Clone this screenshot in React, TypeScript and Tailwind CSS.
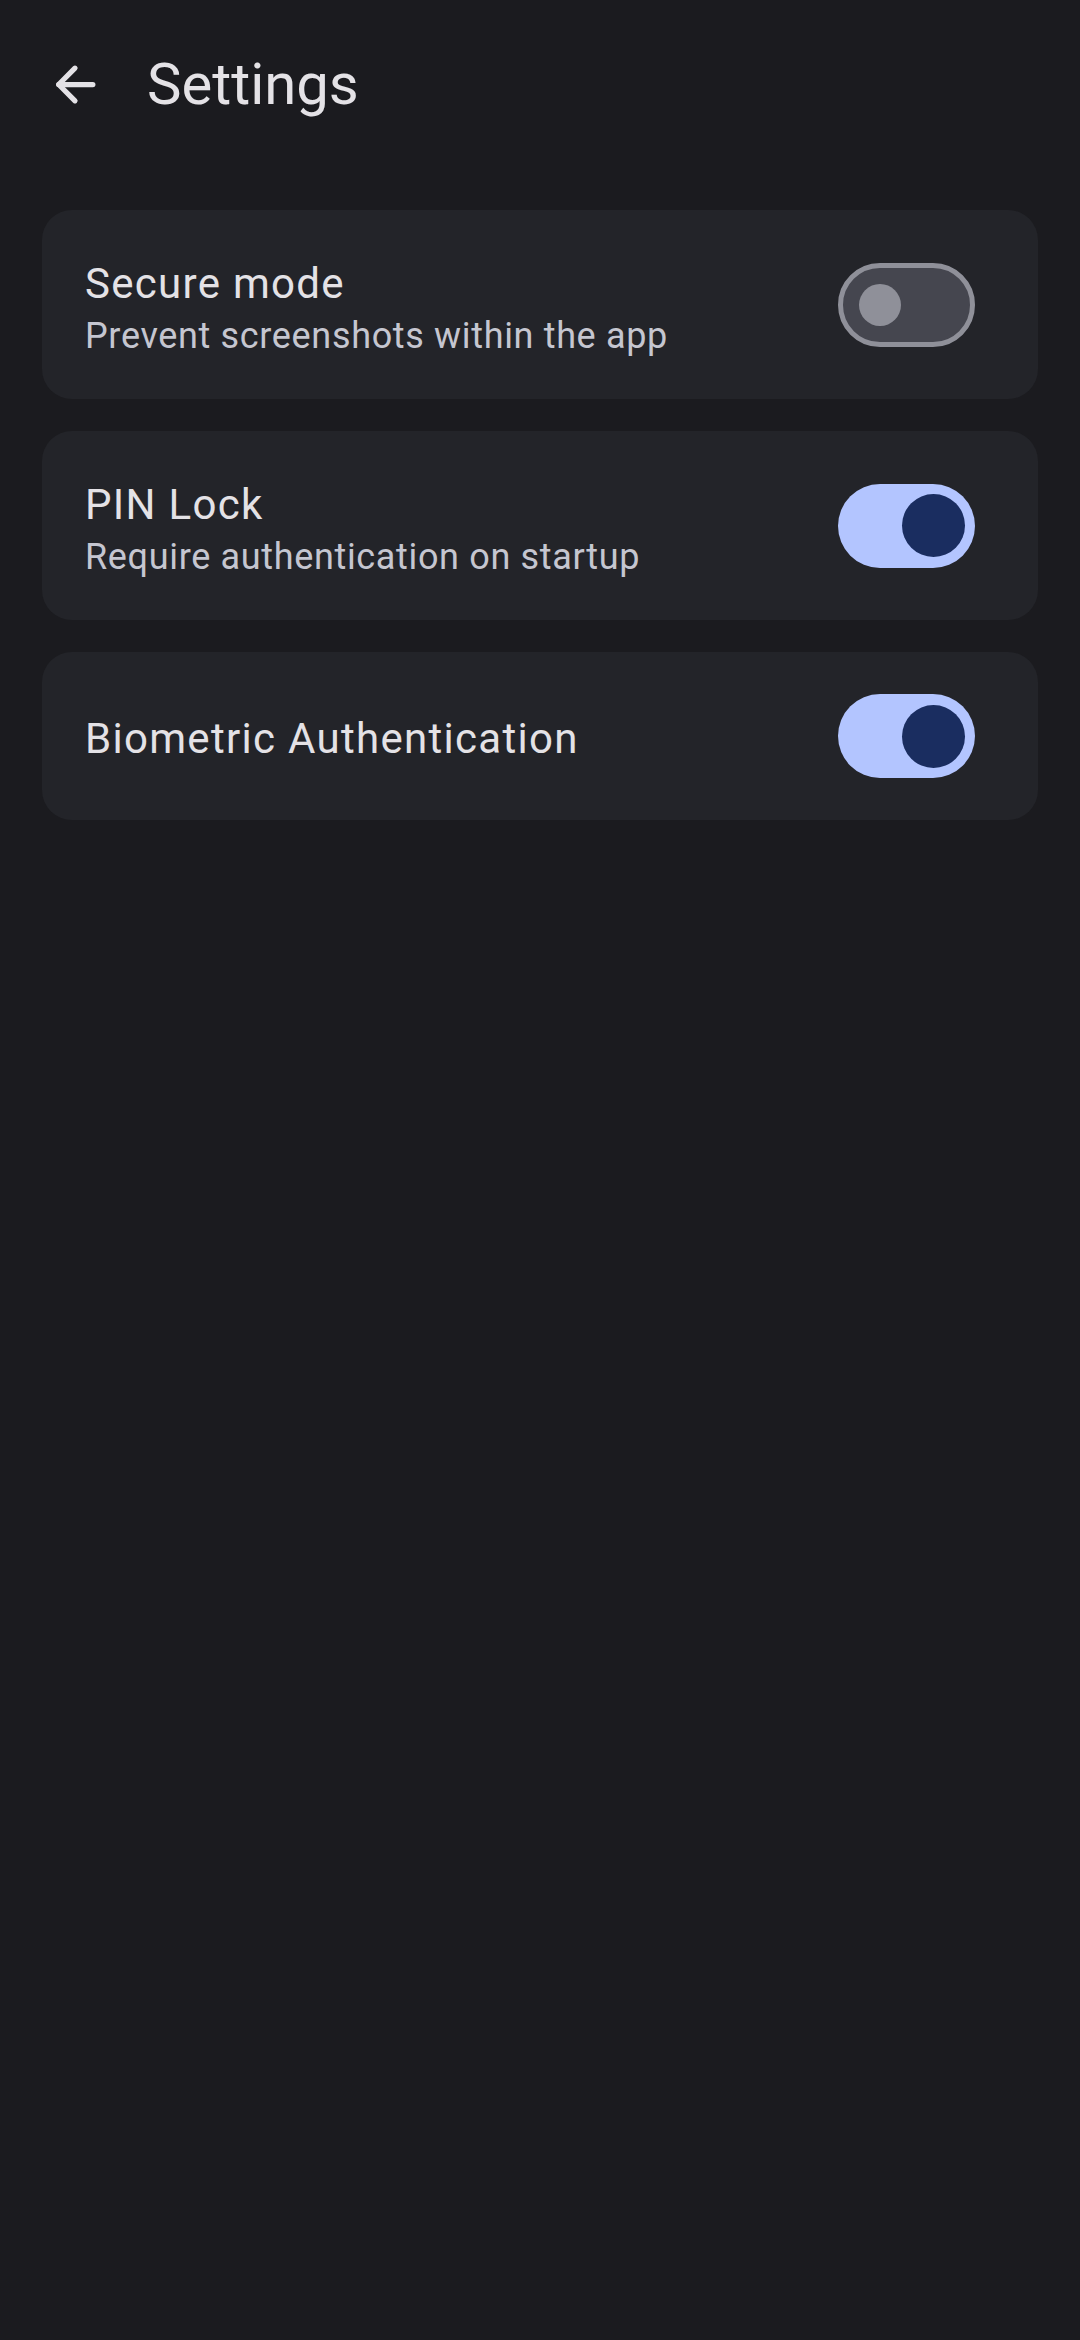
import { useState } from "react";

interface SettingRow {
  title: string;
  subtitle?: string;
  enabled: boolean;
}

const ROWS: SettingRow[] = [
  { title: "Secure mode", subtitle: "Prevent screenshots within the app", enabled: false },
  { title: "PIN Lock", subtitle: "Require authentication on startup", enabled: true },
  { title: "Biometric Authentication", enabled: true },
];

const Toggle = ({ on, onClick }: { on: boolean; onClick: () => void }) => (
  <button
    onClick={onClick}
    className={
      on
        ? "flex h-[84px] w-[137px] shrink-0 items-center justify-end rounded-full bg-[#b3c5ff] pr-[10px]"
        : "flex h-[84px] w-[137px] shrink-0 items-center justify-start rounded-full border-[5px] border-[#8f9099] bg-[#45464f] pl-[16px]"
    }
  >
    {on ? (
      <span className="block h-[63px] w-[63px] rounded-full bg-[#1a2d60]" />
    ) : (
      <span className="block h-[42px] w-[42px] rounded-full bg-[#8f9099]" />
    )}
  </button>
);

export default function App() {
  const [state, setState] = useState(ROWS.map((r) => r.enabled));

  return (
    <div
      className="min-h-[2340px] w-[1080px] bg-[#1b1b1f] text-[#e4e2e6]"
      style={{ fontFamily: "Roboto, 'Noto Sans', sans-serif" }}
    >
      <header className="flex h-[168px] items-center">
        <div className="ml-[44px] flex h-[63px] w-[63px] items-center justify-center">
          <svg width="63" height="63" viewBox="0 0 24 24" fill="none" stroke="#e4e2e6" strokeWidth="2" strokeLinecap="round" strokeLinejoin="round">
            <path d="M11.8 5.8 5.6 12l6.2 6.2" />
            <path d="M5.6 12H18.6" />
          </svg>
        </div>
        <h1 className="ml-[40px] text-[58px] leading-none">Settings</h1>
      </header>

      <div className="flex flex-col gap-[32px] px-[42px] pt-[42px]">
        {ROWS.map((row, idx) => (
          <div
            key={idx}
            className={
              row.subtitle
                ? "flex h-[189px] items-center justify-between rounded-[30px] bg-[#232429] pl-[43px] pr-[63px]"
                : "flex h-[168px] items-center justify-between rounded-[30px] bg-[#232429] pl-[43px] pr-[63px]"
            }
          >
            <div className={row.subtitle ? "flex flex-col pt-[10px]" : "flex flex-col pt-[6px]"}>
              <span className="text-[42px] leading-[50px] tracking-[1.3px] text-[#e4e2e6]">{row.title}</span>
              {row.subtitle && (
                <span className="mt-[2px] text-[36px] leading-[50px] tracking-[0.66px] text-[#c5c6d0]">
                  {row.subtitle}
                </span>
              )}
            </div>
            <Toggle
              on={state[idx]}
              onClick={() => setState((s) => s.map((v, i) => (i === idx ? !v : v)))}
            />
          </div>
        ))}
      </div>
    </div>
  );
}
